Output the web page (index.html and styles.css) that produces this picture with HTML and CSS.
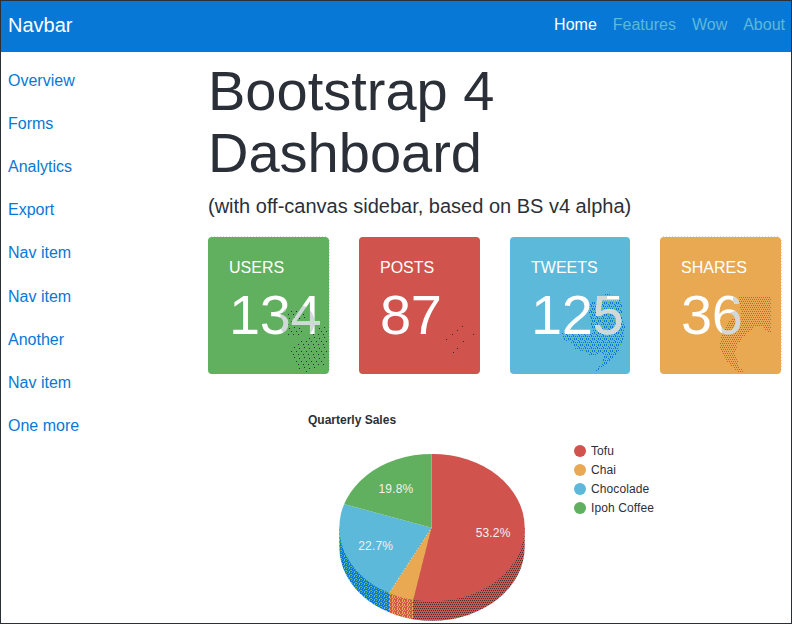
FILE: index.html
```html
<!DOCTYPE html>
<html lang="en">
<head>
<meta charset="utf-8">
<title>Bootstrap 4 Dashboard</title>
<link rel="stylesheet" href="styles.css">
</head>
<body>
<div class="page">
  <header class="navbar">
    <a class="brand">Navbar</a>
    <nav class="links"><a class="active">Home</a><a>Features</a><a>Wow</a><a>About</a></nav>
  </header>
  <div class="layout">
    <nav class="sidebar">
      <a>Overview</a><a>Forms</a><a>Analytics</a><a>Export</a><a>Nav item</a><a>Nav item</a><a>Another</a><a>Nav item</a><a>One more</a>
    </nav>
    <main class="main">
      <h1>Bootstrap 4 Dashboard</h1>
      <p class="lead">(with off-canvas sidebar, based on BS v4 alpha)</p>
      <section class="cards">
        <div class="card green dotted">
          <svg class="icon" viewBox="0 0 121 137">
            <defs><pattern id="userDots" width="10" height="10" patternUnits="userSpaceOnUse"><path fill="#2b3038" d="M1 1h1v1h-1zM6 0h1v1h-1zM3 4h1v1h-1zM8 4h1v1h-1zM5 7h1v1h-1zM0 7h1v1h-1z"/></pattern></defs>
            <path fill="url(#userDots)" d="M79 72h14l6 7-7 20h-13zM87 108l13-9 7-2 5-7 7-3v29l-3 12-10 5-6 3-8-2-6-8-6-13z"/>
          </svg>
          <h6>USERS</h6><div class="number users">134</div>
        </div>
        <div class="card red">
          <svg class="icon" viewBox="27 21 363 411"><path fill="#2b3038" d="M336 288h3v3h-3zM321 300h3v3h-3zM306 312h3v3h-3zM288 327h3v3h-3zM369 312h3v3h-3zM339 333h3v3h-3zM321 354h3v3h-3zM309 366h3v3h-3z"/></svg>
          <h6>POSTS</h6><div class="number">87</div>
        </div>
        <div class="card blue">
          <svg class="icon" viewBox="0 0 121 137">
            <defs><pattern id="birdDots" width="6" height="6" patternUnits="userSpaceOnUse"><path fill="#0878d6" d="M0 0h1v1h-1zM2 1h1v1h-1zM4 0h1v1h-1zM1 3h1v1h-1zM3 2h1v2h-1zM5 3h1v1h-1zM0 5h1v1h-1zM4 5h1v1h-1z"/><path fill="#60b060" d="M2 5h1v1h-1zM5 1h1v1h-1z"/></pattern></defs>
            <path fill="url(#birdDots)" d="M96 56l7 2 9 6v20l3 3-1 13-6 15-11 12-12 8h-1l8-9 2-9-15 1-5-4-9-1-3-7-8-3-2-7h32l-5-17V67l8-4z"/>
          </svg>
          <h6>TWEETS</h6><div class="number tweets">125</div>
        </div>
        <div class="card orange dotted">
          <svg class="icon" viewBox="0 0 121 137">
            <defs><pattern id="shareDots" x="1" width="4" height="4" patternUnits="userSpaceOnUse"><path fill="#e0503f" d="M0 0h1v1h-1zM2 0h1v1h-1zM1 2h1v1h-1zM3 2h1v1h-1z"/></pattern><pattern id="shareSpecks" width="12" height="12" patternUnits="userSpaceOnUse"><path fill="#60b060" d="M5 0h1v1h-1zM10 6h1v1h-1z"/></pattern></defs>
            <path fill="url(#shareDots)" d="M78 60h33v36h-3l-6-7-7 1-10 8-8 10-2 11 6 13 5 4h-7l-13-12-6-11 1-14 9-16 12-4z"/>
            <path fill="url(#shareSpecks)" d="M82 62h27v22l-27 8-8 14-3 15-8-4v-19l19-17z"/>
          </svg>
          <h6>SHARES</h6><div class="number shares">36</div>
        </div>
      </section>
      <section class="chart">
        <h2>Quarterly Sales</h2>
        <div class="chart-row">
          <svg class="pie" width="187" height="170" viewBox="338 453 187 170">
            <defs>
              <pattern id="redSide" width="4" height="4" patternUnits="userSpaceOnUse"><path fill="#d0534d" d="M0 0h4v4h-4z"/><path fill="#4a2e36" d="M0 0h1v1h-1zM2 0h1v1h-1zM1 2h1v1h-1zM3 2h1v1h-1z"/></pattern>
              <pattern id="orangeSide" width="5" height="4" patternUnits="userSpaceOnUse"><path fill="#e8a952" d="M0 0h5v4h-5z"/><path fill="#d0534d" d="M0 0h2v1h-2zM3 0h1v2h-1zM1 2h2v1h-2zM4 2h1v2h-1zM0 3h2v1h-2zM0 1h1v1h-1z"/><path fill="#60b060" d="M1 1h1v1h-1zM3 3h1v1h-1z"/></pattern>
              <pattern id="blueSide" width="5" height="4" patternUnits="userSpaceOnUse"><path fill="#0878d6" d="M0 0h5v4h-5z"/><path fill="#60b060" d="M1 0h1v1h-1zM3 1h1v1h-1zM0 2h1v1h-1zM2 3h1v1h-1z"/><path fill="#5db9da" d="M4 0h1v1h-1zM1 2h1v1h-1zM4 3h1v1h-1z"/></pattern>
              <clipPath id="rim"><path d="M339.3 527.7h185.4v19.3a92.7 73.8 0 0 1-185.4 0z"/></clipPath>
              <clipPath id="face"><ellipse cx="432" cy="527.7" rx="92.7" ry="73.8"/></clipPath>
            </defs>
            <g clip-path="url(#rim)" shape-rendering="crispEdges">
              <path fill="url(#redSide)" d="M413 527h113v95H413z"/>
              <path fill="url(#orangeSide)" d="M389 527h24v95h-24z"/>
              <path fill="url(#blueSide)" d="M338 527h51v95h-51z"/>
            </g>
            <g clip-path="url(#face)">
              <path fill="#d0534d" d="M431.5 453H526V623H407.4L431.5 527.7z"/>
              <path fill="#e8a952" d="M431.5 527.7L410 612.7h-33.5z"/>
              <path fill="#5db9da" d="M431.5 527.7L376.5 612.7H330V500.3z"/>
              <path fill="#60b060" d="M431.5 527.7L330 500.3V450h101.5z"/>
            </g>
            <path stroke="#e8f0c8" stroke-dasharray="1 2" d="M431.5 527.7L389.3 593"/>
            <text x="475.7" y="537">53.2%</text>
            <text x="358.3" y="550">22.7%</text>
            <text x="378.5" y="493">19.8%</text>
          </svg>
          <ul class="legend"><li class="tofu">Tofu</li><li class="chai">Chai</li><li class="choc">Chocolade</li><li class="ipoh">Ipoh Coffee</li></ul>
        </div>
      </section>
    </main>
  </div>
</div>
</body>
</html>
```
FILE: styles.css
```css
* { box-sizing: border-box; }
body { margin: 0; font-family: "Liberation Sans", Arial, sans-serif; font-size: 16px; line-height: 24px; color: #2b3038; background: #fff; }
.page { width: 792px; height: 624px; border: 1px solid #2b3038; overflow: hidden; }
.navbar { height: 51px; background: #0878d6; display: flex; justify-content: space-between; padding: 11px 6px 0 7px; }
.brand { font-size: 20px; line-height: 26px; color: #fff; }
.links { display: flex; gap: 16px; color: #5db9da; padding-top: 1px; }
.links .active { color: #fff; }
.layout { display: flex; }
.sidebar { width: 207px; padding: 17px 0 0 7px; color: #0878d6; display: flex; flex-direction: column; gap: 19.11px; }
.main { width: 573px; padding-top: 8px; }
h1 { margin: 0; width: 400px; font-size: 56px; line-height: 62px; font-weight: 400; }
.lead { margin: 7px 0 0; font-size: 20px; line-height: 30px; height: 46px; }
.cards { display: grid; grid-template-columns: 121px 121px 120px 121px; gap: 30px; height: 137px; }
.card { position: relative; border-radius: 4px; padding: 19px 0 0 21px; color: #fff; }
.green { background: #60b060; }
.red { background: #d0534d; }
.blue { background: #5db9da; }
.orange { background: #e8a952; }
.dotted::before { content: ""; position: absolute; left: 3px; right: 3px; top: -1px; height: 1px; background: repeating-linear-gradient(90deg, #d0d8d8 0 1px, #fff 1px 3px); }
.dotted::after { content: ""; position: absolute; top: 3px; bottom: 3px; right: -1px; width: 1px; background: repeating-linear-gradient(#d0d8d8 0 1px, #fff 1px 3px); }
.icon { position: absolute; left: 0; top: 0; width: 121px; height: 137px; shape-rendering: crispEdges; }
h6 { position: relative; margin: 0; font-size: 16px; line-height: 24px; font-weight: 400; }
.number { position: relative; width: 100px; font-size: 56px; line-height: 62px; margin-top: 4px; letter-spacing: -.4px; }
.users, .tweets, .shares { color: transparent; -webkit-background-clip: text; background-clip: text; }
.users { background-image: linear-gradient(#d0d8d8, #d0d8d8), radial-gradient(circle at 68px 38px, #d0d8d8 17px, #fff 18px); background-size: 30px 5px, auto; background-position: 67px 36px, 0 0; background-repeat: no-repeat; }
.tweets { background-image: linear-gradient(#fff, #fff), linear-gradient(#d0d8d8, #d0d8d8), linear-gradient(#fff, #fff); background-size: 20px 15px, 40px 62px, auto; background-position: 76px 0, 61px 0, 0 0; background-repeat: no-repeat; }
.shares { background-image: linear-gradient(#d0d8d8, #d0d8d8), radial-gradient(circle at 58px 44px, #d0d8d8 17px, #fff 18px); background-size: 20px 10px, auto; background-position: 52px 12px, 0 0; background-repeat: no-repeat; }
.chart { padding: 36px 0 0 100px; }
h2 { margin: 0; font-size: 12px; line-height: 20px; font-weight: 700; }
.chart-row { display: flex; align-items: flex-start; gap: 49px; padding: 23px 0 0 30px; }
.pie { flex: none; }
.pie text { font-size: 12px; letter-spacing: .15px; fill: #f0f2f2; }
.legend { list-style: none; margin: -11.5px 0 0; padding: 0; font-size: 12px; line-height: 19px; letter-spacing: .1px; }
.legend li { display: flex; align-items: center; gap: 5px; }
.legend li::before { content: ""; width: 12px; height: 12px; border-radius: 50%; background: currentColor; }
.legend .tofu::before { background: #d0534d; }
.legend .chai::before { background: #e8a952; }
.legend .choc::before { background: #5db9da; }
.legend .ipoh::before { background: #60b060; }
```
